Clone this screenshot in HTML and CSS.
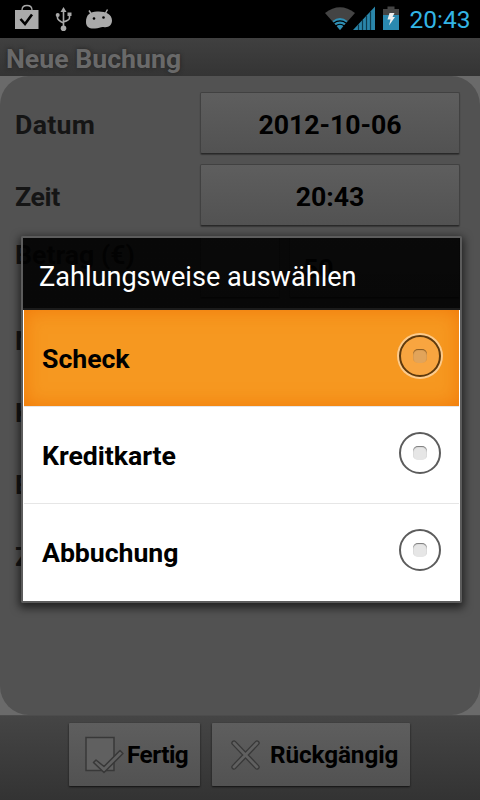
FILE: index.html
```html
<!DOCTYPE html>
<html lang="de">
<head>
<meta charset="utf-8">
<title>Neue Buchung</title>
<link rel="stylesheet" href="styles.css">
</head>
<body>
<div class="screen">
  <header class="status">
    <svg class="status-left" width="130" height="38" viewBox="0 0 130 38">
      <path d="M15 10H38.500V29H15Z" fill="#aaa"/>
      <path d="M22 12V10Q22 5.500 27 5.500Q32 5.500 32 10V12" fill="none" stroke="#aaa" stroke-width="1.300"/>
      <path d="M20.500 19L25 24L32 14.500" fill="none" stroke="#000" stroke-width="2.600"/>
      <g fill="none" stroke="#aaa" stroke-width="1.600"><path d="M63.500 10V28M57.500 16V18Q57.500 20 63.500 23M69.500 15V18Q69.500 20 63.500 22"/></g>
      <path d="M63.500 7L66.500 12H60.500Z" fill="#aaa"/><circle cx="63.500" cy="28.300" r="2.800" fill="#aaa"/><circle cx="57.700" cy="15" r="2" fill="#aaa"/><path d="M67.500 12.500H71.500V16H67.500Z" fill="#aaa"/>
      <path d="M86 22C86 15 90 11.500 97 11.500C105 11 112 14 112 20.500C112 25.500 108 28 103.500 27C101 26.500 99 28.500 95 28.500C90 29 86 27.500 86 22Z" fill="#aaa"/>
      <path d="M92 15L89 10.500M105 14L107.500 9.500" stroke="#aaa" stroke-width="1.500"/>
      <circle cx="94" cy="18.500" r="1.300"/><circle cx="103.500" cy="17.500" r="1.300"/>
    </svg>
    <svg class="status-right" width="80" height="38" viewBox="0 0 80 38">
      <path d="M5 13Q20 1.500 35 13L20 30Z" fill="#444"/>
      <path d="M12.500 21Q20 15 27.500 21L20 30Z" fill="#2e8fb5"/>
      <path d="M13.500 23.200Q20 18.500 26.500 23.200M15.500 26Q20 22.500 24.500 26" fill="none" stroke="#000" stroke-width="1.100"/>
      <path d="M33 30L55 6.500V30Z" fill="#2a86aa"/>
      <path d="M38.500 24.500V30M42.500 20V30M46.500 16V30M50.500 11.500V30" stroke="#0d3b4e" stroke-width="1.200"/>
      <path d="M63 9H67.500V6.500H74.500V9H79V15H63Z" fill="#444"/><path d="M63 15H79V30H63Z" fill="#2a89b0"/>
      <path d="M69.500 13H74.500L72.500 17H75L69 25.500L70.500 19.500H67.500Z" fill="#eee"/>
    </svg>
    <span class="clock">20:43</span>
  </header>
  <div class="titlebar"><span class="title">Neue Buchung</span></div>
  <main class="body">
    <div class="form">
      <div class="row"><span class="label">Datum</span><div class="button"><span>2012-10-06</span></div></div>
      <div class="row"><span class="label zeit">Zeit</span><div class="button"><span>20:43</span></div></div>
      <div class="row amount"><span class="label">Betrag (€)</span><div class="button small"></div><div class="button value">50</div></div>
      <div class="row"><span class="label">N</span></div>
      <div class="row"><span class="label">K</span></div>
      <div class="row"><span class="label">B</span></div>
      <div class="row"><span class="label">Z</span></div>
    </div>
  </main>
  <footer class="footer">
    <div class="action done">
      <svg width="40" height="40" viewBox="0 0 40 40"><path d="M2 2.500H30V35.500H2Z" fill="#606060" stroke="#383838" stroke-width="1.500"/><path d="M9.500 27.500L12 25L20 31.500L36 15.500L39 18.500L20 37.500Z" fill="#606060" stroke="#383838" stroke-width="1.500" stroke-linejoin="round"/></svg>
      <span>Fertig</span>
    </div>
    <div class="action undo">
      <svg width="32" height="32" viewBox="0 0 32 32"><path d="M5 4L28 28M28 4L5 28" stroke="#383838" stroke-width="5.400" stroke-linecap="round"/><path d="M5 4L28 28M28 4L5 28" stroke="#606060" stroke-width="2.800" stroke-linecap="round"/></svg>
      <span>Rückgängig</span>
    </div>
  </footer>
  <section class="dialog">
    <div class="dialog-title"><span>Zahlungsweise auswählen</span></div>
    <div class="option selected"><span>Scheck</span><i class="radio"></i></div>
    <div class="option"><span>Kreditkarte</span><i class="radio"></i></div>
    <div class="option"><span>Abbuchung</span><i class="radio"></i></div>
  </section>
</div>
</body>
</html>
```
FILE: styles.css
```css
* { box-sizing: border-box; }
body { margin: 0; background: #000; font-family: Roboto, sans-serif; }
.screen { position: relative; width: 480px; height: 800px; display: flex; flex-direction: column; overflow: hidden; font-size: 26.7px; font-weight: 700; color: #000; white-space: nowrap; }
.status { height: 38px; background: #000; display: flex; }
.status-left { margin-right: 190px; flex: none; }
.status-right { flex: none; }
.clock { margin-left: 9.5px; font-size: 24.5px; font-weight: 400; line-height: 40px; color: #33b5e5; }
.titlebar { height: 38px; padding-left: 6px; line-height: 42px; background: linear-gradient(#404040, #343434); color: #696969; text-shadow: 0 0 4px #222; }
.body { height: 639px; background: #6a6a6a; }
.form { height: 639px; padding: 13px 20px 0 15px; border-radius: 29px; background: #525252; }
.row { height: 72px; display: flex; align-items: center; }
.label { width: 185px; flex: none; color: #151515; letter-spacing: 0.3px; }
.label.zeit { letter-spacing: -0.4px; }
.button { flex: 1; height: 62px; margin-bottom: 4px; padding-top: 3px; display: flex; align-items: center; justify-content: center; border-radius: 2px; border: 1px solid #414141; border-bottom-color: #292929; background: linear-gradient(#5e5e5e, #525252); box-shadow: 0 1px 1px #383838; letter-spacing: -0.05px; }
.amount { align-items: flex-start; }
.amount .label { line-height: 30px; padding-top: 7px; letter-spacing: 0; }
.amount .button { margin-top: 3px; }
.button.small { flex: none; width: 80px; margin-right: 9px; }
.button.value { justify-content: flex-start; padding-left: 13px; }
.footer { height: 85px; padding: 8px 0 0 69px; display: flex; gap: 12px; background: linear-gradient(#454545, #333); border-top: 1px solid #4c4c4c; font-size: 24.3px; }
.action { height: 63px; margin-top: -1px; display: flex; align-items: center; background: linear-gradient(#5e5e5e, #525252); border-radius: 1px; box-shadow: 0 1px 2px #111; }
.done { width: 131px; padding-left: 15px; gap: 3px; letter-spacing: -0.5px; }
.undo { width: 198px; padding-left: 17px; gap: 9px; letter-spacing: -0.1px; }
.dialog { position: absolute; left: 21px; top: 236px; width: 441px; height: 367px; border: 2px solid #5c5c5c; border-radius: 2px; background: linear-gradient(rgba(0,0,0,.9) 72px, #fff 72px); background-clip: padding-box; box-shadow: 0 3px 9px 2px rgba(0,0,0,.6); }
.dialog-title { height: 72px; padding: 8px 0 0 16px; display: flex; align-items: center; color: #fff; font-size: 27.1px; font-weight: 400; border-bottom: 2px solid #1b1b1b; }
.option { height: 97px; margin: 0 1px; padding: 0 18px 4px; display: flex; align-items: center; justify-content: space-between; border-bottom: 1px solid #e6e6e6; letter-spacing: -0.05px; }
.option span { padding-top: 6px; }
.option:last-child { border-bottom: 0; padding-bottom: 5px; }
.selected { background: #f69820; box-shadow: inset 0 0 20px #f17909; }
.radio { width: 42px; height: 42px; flex: none; border: 2px solid #5c5c5c; border-radius: 50%; display: flex; align-items: center; justify-content: center; }
.radio::after { content: ""; width: 14px; height: 14px; border-radius: 5px; background: #e6e6e6; box-shadow: inset 0 1px 1px #777; }
.selected .radio { border-color: #5e390c; background: #f8a540; box-shadow: 0 0 0 2px #fccb8c; }
.selected .radio::after { background: #e2a45a; box-shadow: inset 0 1px 1px #86571d; }
```
